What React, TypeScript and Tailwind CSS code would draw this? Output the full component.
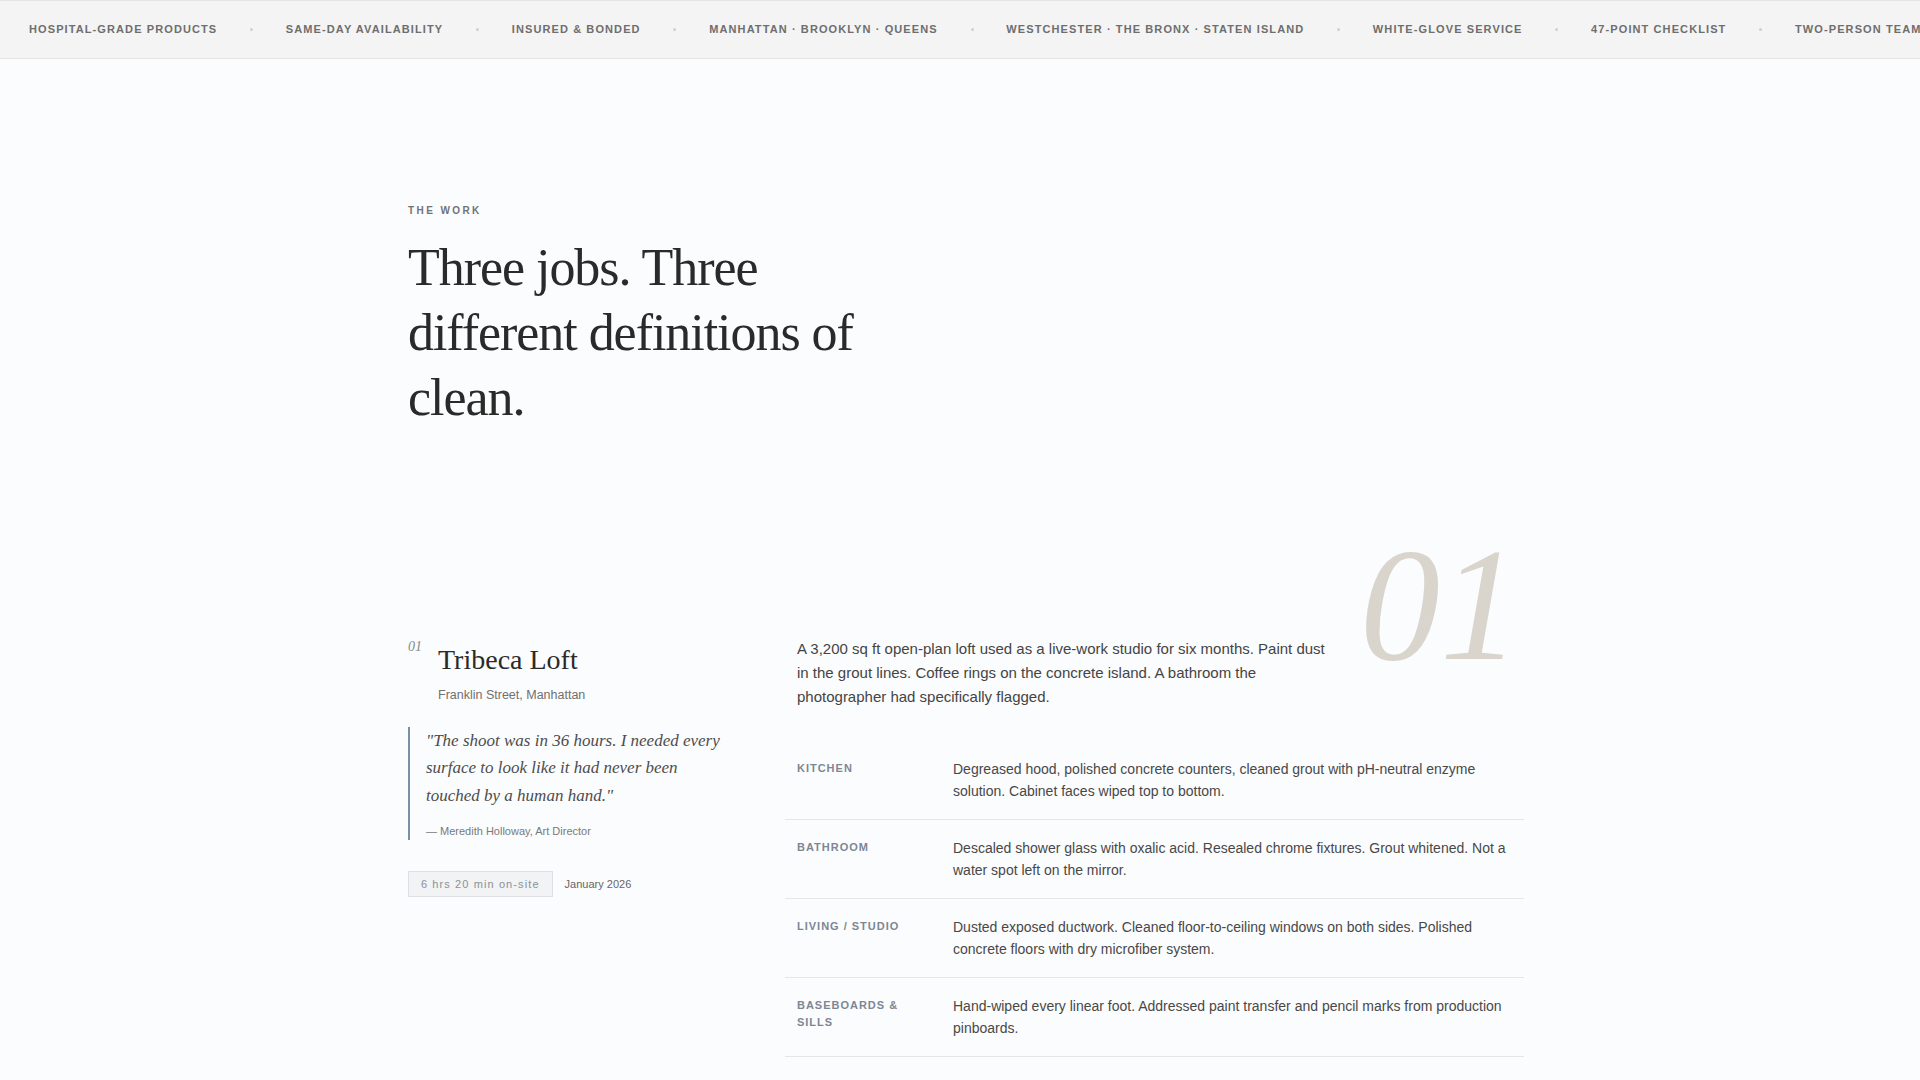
import React from "react";

const tickerItems = [
  "HOSPITAL-GRADE PRODUCTS",
  "SAME-DAY AVAILABILITY",
  "INSURED & BONDED",
  "MANHATTAN · BROOKLYN · QUEENS",
  "WESTCHESTER · THE BRONX · STATEN ISLAND",
  "WHITE-GLOVE SERVICE",
  "47-POINT CHECKLIST",
  "TWO-PERSON TEAMS",
  "HOSPITAL-GRADE PRODUCTS",
  "SAME-DAY AVAILABILITY",
];

const rows = [
  {
    label: "KITCHEN",
    text: "Degreased hood, polished concrete counters, cleaned grout with pH-neutral enzyme solution. Cabinet faces wiped top to bottom.",
  },
  {
    label: "BATHROOM",
    text: "Descaled shower glass with oxalic acid. Resealed chrome fixtures. Grout whitened. Not a water spot left on the mirror.",
  },
  {
    label: "LIVING / STUDIO",
    text: "Dusted exposed ductwork. Cleaned floor-to-ceiling windows on both sides. Polished concrete floors with dry microfiber system.",
  },
  {
    label: "BASEBOARDS & SILLS",
    text: "Hand-wiped every linear foot. Addressed paint transfer and pencil marks from production pinboards.",
  },
];

export default function App() {
  return (
    <div className="min-h-screen bg-[#fbfcfd] font-['Liberation_Sans',Arial,sans-serif] pb-24">
      {/* Ticker */}
      <div className="h-[59px] border-y border-[#e4e4e4] bg-[#f4f4f4] overflow-hidden flex items-center">
        <div className="flex items-center gap-[32.8px] pl-[29px] whitespace-nowrap">
          {tickerItems.map((t, i) => (
            <React.Fragment key={i}>
              {i > 0 && <span className="w-[3px] h-[3px] rounded-full bg-[#cfcfcf] shrink-0" />}
              <span className="text-[11px] font-bold tracking-[0.1em] text-[#6e6e6e] leading-none">{t}</span>
            </React.Fragment>
          ))}
        </div>
      </div>

      <div className="mx-auto max-w-[1128px] px-3 pt-[144px]">
        {/* Heading */}
        <div className="text-[10px] font-bold tracking-[0.24em] text-[#707377] leading-[16px]">THE WORK</div>
        <h2 className="mt-4 max-w-lg font-['Liberation_Serif','Times_New_Roman',serif] text-[52px] leading-[65px] tracking-[-0.02em] text-[#2a2a2a]">
          Three jobs. Three different definitions of clean.
        </h2>

        {/* Project */}
        <div className="mt-[207px] grid grid-cols-[345px_1fr] gap-8 items-start">
          {/* Left */}
          <div className="max-w-[320px]">
            <div className="flex items-start gap-4">
              <span className="font-['Liberation_Serif',serif] italic text-[14px] leading-5 text-[#8a8a8a]">01</span>
              <div className="mt-[8px]">
                <h3 className="font-['Liberation_Serif','Times_New_Roman',serif] text-[28px] leading-[1.1] text-[#2a2a2a]">
                  Tribeca Loft
                </h3>
                <div className="mt-[10px] text-[12.5px] leading-[19px] text-[#707070]">Franklin Street, Manhattan</div>
              </div>
            </div>

            <blockquote className="mt-[22px] border-l-2 border-[#7a8fa3] pl-4">
              <p className="font-['Liberation_Serif',serif] italic text-[17px] leading-[27.5px] text-[#4d4d4d]">
                "The shoot was in 36 hours. I needed every surface to look like it had never been touched by a human hand."
              </p>
              <div className="mt-[14px] text-[11px] leading-[17px] text-[#7a7a7a]">— Meredith Holloway, Art Director</div>
            </blockquote>

            <div className="mt-[31px] flex items-center gap-3">
              <span className="border border-[#dde1e5] bg-[#f1f3f5] px-3 py-1 text-[11px] leading-[16px] tracking-[0.1em] text-[#8a9299]">
                6 hrs 20 min on-site
              </span>
              <span className="text-[11px] text-[#666666]">January 2026</span>
            </div>
          </div>

          {/* Right */}
          <div className="relative">
            <span className="pointer-events-none absolute right-[-8px] top-[-112px] font-['Liberation_Serif',serif] italic text-[160px] leading-none text-[#d9d5cd] select-none">
              01
            </span>
            <p className="relative pl-3 max-w-[552px] text-[15px] leading-[24px] text-[#444444]">
              A 3,200 sq ft open-plan loft used as a live-work studio for six months. Paint dust in the grout lines. Coffee rings on the concrete island. A bathroom the photographer had specifically flagged.
            </p>

            <div className="mt-8 -mr-3">
              {rows.map((r) => (
                <div key={r.label} className="grid grid-cols-[128px_1fr] gap-7 border-b border-[#e4e6e8] px-3 py-[17px]">
                  <div className="mt-[2px] text-[11px] font-bold tracking-[0.09em] leading-[17px] text-[#7d8794]">{r.label}</div>
                  <div className="text-[14px] leading-[22px] text-[#484848]">{r.text}</div>
                </div>
              ))}
            </div>
          </div>
        </div>
      </div>
    </div>
  );
}
